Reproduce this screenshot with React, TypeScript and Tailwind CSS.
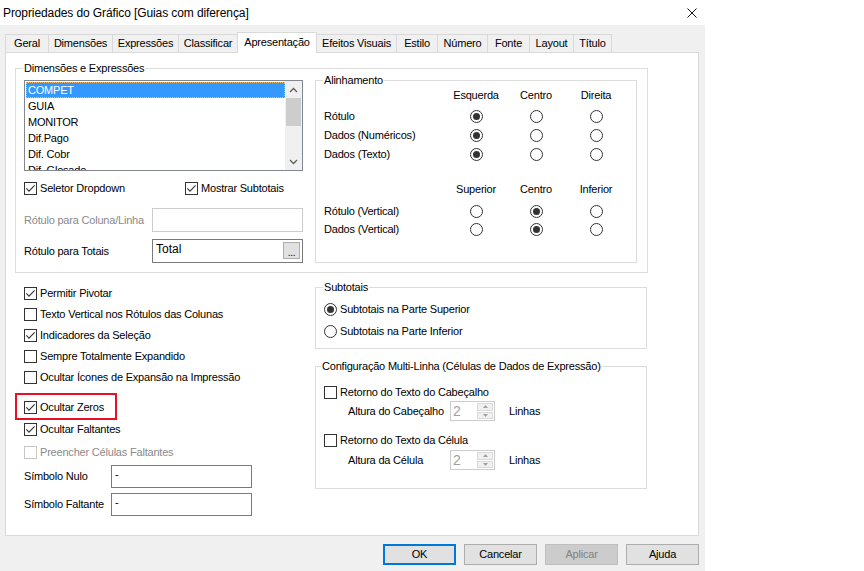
import React from "react";

const Check = ({ checked = false, disabled = false }: { checked?: boolean; disabled?: boolean }) => (
  <span
    className={`w-[13px] h-[13px] shrink-0 border bg-white flex items-center justify-center ${
      disabled ? "border-[#c6c6c6]" : "border-[#333333]"
    }`}
  >
    {checked && (
      <svg width="11" height="11" viewBox="0 0 11 11">
        <path d="M1.3 5.4 L4 8.1 L9.6 2.3" fill="none" stroke="#333333" strokeWidth="1.1" />
      </svg>
    )}
  </span>
);

const Radio = ({ on = false }: { on?: boolean }) => (
  <span className="w-[13px] h-[13px] shrink-0 rounded-full border border-[#333333] bg-white flex items-center justify-center">
    {on && <span className="w-[7px] h-[7px] rounded-full bg-[#333333]" />}
  </span>
);

const Group = ({
  title,
  className,
  legendLeft,
  children,
}: {
  title: string;
  className: string;
  legendLeft: string;
  children?: React.ReactNode;
}) => (
  <div className={`relative border border-[#dcdcdc] ${className}`}>
    <span className={`absolute top-[-8px] ${legendLeft} bg-white px-[1px] leading-[14px] whitespace-nowrap`}>
      {title}
    </span>
    {children}
  </div>
);

const CheckRow = ({
  label,
  checked = false,
  disabled = false,
  h = "h-[21px]",
}: {
  label: string;
  checked?: boolean;
  disabled?: boolean;
  h?: string;
}) => (
  <div className={`flex items-center gap-[3px] ${h}`}>
    <Check checked={checked} disabled={disabled} />
    <span className={disabled ? "text-[#8a8a8a]" : ""}>{label}</span>
  </div>
);

const AlignRow = ({ label, sel, h }: { label: string; sel: number; h: string }) => (
  <div className={`flex items-center ${h}`}>
    <span className="w-[122px]">{label}</span>
    {[0, 1, 2].map((i) => (
      <span key={i} className="w-[60px] flex justify-center">
        <Radio on={sel === i} />
      </span>
    ))}
  </div>
);

const AlignHeader = ({ cols, h }: { cols: string[]; h: string }) => (
  <div className={`flex items-center ${h}`}>
    <span className="w-[122px]" />
    {cols.map((c) => (
      <span key={c} className="w-[60px] text-center">
        {c}
      </span>
    ))}
  </div>
);

const Spin = () => (
  <div className="w-[45px] h-[20px] border border-[#cccccc] bg-white flex">
    <span className="flex-1 pl-[2px] text-[#a0a0a0] text-[14px] leading-[18px] tracking-normal">2</span>
    <div className="w-[17px] flex flex-col py-[1px] pr-[1px] gap-[1px]">
      <span className="flex-1 bg-[#f0f0f0] border border-[#dadada] flex items-center justify-center">
        <svg width="5" height="3" viewBox="0 0 5 3">
          <path d="M0 3 L2.5 0 L5 3 Z" fill="#a0a0a0" />
        </svg>
      </span>
      <span className="flex-1 bg-[#f0f0f0] border border-[#dadada] flex items-center justify-center">
        <svg width="5" height="3" viewBox="0 0 5 3">
          <path d="M0 0 L2.5 3 L5 0 Z" fill="#a0a0a0" />
        </svg>
      </span>
    </div>
  </div>
);

const tabs: { label: string; w: string; sel?: boolean }[] = [
  { label: "Geral", w: "w-[43px]" },
  { label: "Dimensões", w: "w-[64px]" },
  { label: "Expressões", w: "w-[66px]" },
  { label: "Classificar", w: "w-[59px]" },
  { label: "Apresentação", w: "w-[80px]", sel: true },
  { label: "Efeitos Visuais", w: "w-[79px]" },
  { label: "Estilo", w: "w-[41px]" },
  { label: "Número", w: "w-[50px]" },
  { label: "Fonte", w: "w-[42px]" },
  { label: "Layout", w: "w-[44px]" },
  { label: "Título", w: "w-[39px]" },
];

const listItems = ["COMPET", "GUIA", "MONITOR", "Dif.Pago", "Dif. Cobr", "Dif. Glosado"];

export default function App() {
  return (
    <div className="w-[864px] h-[571px] bg-white relative overflow-hidden font-['Liberation_Sans',Arial,sans-serif] text-[11px] tracking-[-0.2px] text-black">
      {/* title bar */}
      <div className="w-[705px] h-[25px] flex items-center justify-between">
        <span className="pl-[3px] text-[12px] tracking-[-0.1px]">Propriedades do Gráfico [Guias com diferença]</span>
        <svg width="10" height="10" viewBox="0 0 10 10" className="mr-[8px] mt-[1px]">
          <path d="M0.5 0.5 L9.5 9.5 M9.5 0.5 L0.5 9.5" stroke="#111111" strokeWidth="1" />
        </svg>
      </div>

      {/* dialog body */}
      <div className="w-[705px] h-[546px] bg-[#f0f0f0] flex flex-col">
        {/* tabs */}
        <div className="h-[27px] pl-[5px] flex items-end">
          {tabs.map((t, i) => {
            const prevSel = i > 0 && tabs[i - 1].sel;
            if (t.sel) {
              return (
                <div
                  key={t.label}
                  className={`${t.w} h-[21px] -mb-[1px] relative z-10 bg-white border-t border-l border-r border-[#d9d9d9] flex items-center justify-center pb-[2px]`}
                >
                  {t.label}
                </div>
              );
            }
            return (
              <div
                key={t.label}
                className={`${t.w} h-[18px] bg-[#f0f0f0] border-t border-[#d9d9d9] flex items-center justify-center ${
                  prevSel ? "" : "border-l"
                } ${i === tabs.length - 1 ? "border-r" : ""}`}
              >
                {t.label}
              </div>
            );
          })}
        </div>

        {/* panel */}
        <div className="ml-[5px] w-[694px] h-[484px] border border-[#d9d9d9] bg-white flex flex-col">
          {/* Dimensões e Expressões */}
          <Group
            title="Dimensões e Expressões"
            legendLeft="left-[7px]"
            className="mt-[15px] ml-[9px] w-[633px] h-[205px] shrink-0 flex pt-[11px] pl-[8px]"
          >
            <div className="w-[279px] flex flex-col">
              {/* listbox */}
              <div className="h-[91px] border border-[#828790] flex overflow-hidden">
                <div className="flex-1 pt-[1px] pl-[1px] overflow-hidden">
                  {listItems.map((it, i) => (
                    <div
                      key={it}
                      className={`h-[16px] leading-[14px] pl-[1px] border ${
                        i === 0
                          ? "bg-[#3399ff] text-white border-dotted border-[#f0c070]"
                          : "border-transparent"
                      }`}
                    >
                      {it}
                    </div>
                  ))}
                </div>
                <div className="w-[17px] bg-[#f0f0f0] flex flex-col">
                  <div className="h-[17px] flex items-center justify-center">
                    <svg width="9" height="6" viewBox="0 0 9 6">
                      <path d="M1 5 L4.5 1.5 L8 5" fill="none" stroke="#606060" strokeWidth="1.3" />
                    </svg>
                  </div>
                  <div className="flex-1 px-[1px]">
                    <div className="h-[28px] bg-[#cdcdcd]" />
                  </div>
                  <div className="h-[17px] flex items-center justify-center">
                    <svg width="9" height="6" viewBox="0 0 9 6">
                      <path d="M1 1 L4.5 4.5 L8 1" fill="none" stroke="#606060" strokeWidth="1.3" />
                    </svg>
                  </div>
                </div>
              </div>

              <div className="mt-[11px] h-[13px] flex items-center">
                <div className="w-[161px] flex items-center gap-[3px]">
                  <Check checked />
                  <span>Seletor Dropdown</span>
                </div>
                <div className="flex items-center gap-[3px]">
                  <Check checked />
                  <span>Mostrar Subtotais</span>
                </div>
              </div>

              <div className="mt-[13px] h-[24px] flex items-center">
                <span className="w-[128px] text-[#8a8a8a]">Rótulo para Coluna/Linha</span>
                <div className="w-[151px] h-[24px] border border-[#cccccc] bg-white" />
              </div>

              <div className="mt-[7px] h-[24px] flex items-center">
                <span className="w-[128px]">Rótulo para Totais</span>
                <div className="w-[151px] h-[24px] border border-[#7a7a7a] bg-white flex items-start justify-between pl-[3px] pr-[2px] pt-[2px]">
                  <span className="leading-[14px] text-[12px] tracking-normal">Total</span>
                  <span className="w-[17px] h-[17px] bg-[#e1e1e1] border border-[#adadad] flex items-end justify-center leading-[10px] text-[10px]">
                    ...
                  </span>
                </div>
              </div>
            </div>

            {/* Alinhamento */}
            <Group
              title="Alinhamento"
              legendLeft="left-[7px]"
              className="ml-[12px] w-[322px] h-[183px] pt-[4px] pl-[8px]"
            >
              <AlignHeader cols={["Esquerda", "Centro", "Direita"]} h="h-[20px]" />
              <AlignRow label="Rótulo" sel={0} h="h-[22px]" />
              <AlignRow label="Dados (Numéricos)" sel={0} h="h-[17px]" />
              <AlignRow label="Dados (Texto)" sel={0} h="h-[21px]" />
              <div className="h-[14px]" />
              <AlignHeader cols={["Superior", "Centro", "Inferior"]} h="h-[20px]" />
              <AlignRow label="Rótulo (Vertical)" sel={1} h="h-[24px]" />
              <AlignRow label="Dados (Vertical)" sel={1} h="h-[13px]" />
            </Group>
          </Group>

          {/* lower section */}
          <div className="flex">
            {/* left column */}
            <div className="w-[300px] ml-[9px] flex flex-col">
              <div className="mt-[10px] pl-[9px] flex flex-col">
                <CheckRow label="Permitir Pivotar" checked />
                <CheckRow label="Texto Vertical nos Rótulos das Colunas" />
                <CheckRow label="Indicadores da Seleção" checked />
                <CheckRow label="Sempre Totalmente Expandido" />
                <CheckRow label="Ocultar Ícones de Expansão na Impressão" />
              </div>
              <div className="mt-[5px] w-[102px] h-[27px] border-2 border-[#e81123] flex items-center pl-[7px] pt-[1px] gap-[3px]">
                <Check checked />
                <span>Ocultar Zeros</span>
              </div>
              <div className="pl-[9px] flex flex-col">
                <CheckRow label="Ocultar Faltantes" checked h="h-[18px]" />
                <div className="mt-[4px]">
                  <CheckRow label="Preencher Células Faltantes" disabled h="h-[20px]" />
                </div>
                <div className="mt-[3px] flex items-center">
                  <span className="w-[87px]">Símbolo Nulo</span>
                  <div className="w-[141px] h-[23px] border border-[#7a7a7a] bg-white pl-[3px] leading-[16px]">-</div>
                </div>
                <div className="mt-[5px] flex items-center">
                  <span className="w-[87px]">Símbolo Faltante</span>
                  <div className="w-[141px] h-[23px] border border-[#7a7a7a] bg-white pl-[3px] leading-[16px]">-</div>
                </div>
              </div>
            </div>

            {/* right column */}
            <div className="flex flex-col">
              <Group
                title="Subtotais"
                legendLeft="left-[7px]"
                className="mt-[14px] w-[332px] h-[62px] pt-[12px] pl-[8px]"
              >
                <div className="h-[18px] flex items-center gap-[3px]">
                  <Radio on />
                  <span>Subtotais na Parte Superior</span>
                </div>
                <div className="mt-[4px] h-[18px] flex items-center gap-[3px]">
                  <Radio />
                  <span>Subtotais na Parte Inferior</span>
                </div>
              </Group>

              <Group
                title="Configuração Multi-Linha (Células de Dados de Expressão)"
                legendLeft="left-[5px]"
                className="mt-[17px] w-[332px] h-[123px] pt-[18px] pl-[8px]"
              >
                <CheckRow label="Retorno do Texto do Cabeçalho" h="h-[14px]" />
                <div className="mt-[2px] ml-[24px] h-[20px] flex items-center">
                  <span className="w-[102px]">Altura do Cabeçalho</span>
                  <Spin />
                  <span className="ml-[14px]">Linhas</span>
                </div>
                <div className="mt-[12px]">
                  <CheckRow label="Retorno do Texto da Célula" h="h-[14px]" />
                </div>
                <div className="mt-[3px] ml-[24px] h-[20px] flex items-center">
                  <span className="w-[102px]">Altura da Célula</span>
                  <Spin />
                  <span className="ml-[14px]">Linhas</span>
                </div>
              </Group>
            </div>
          </div>
        </div>

        {/* buttons */}
        <div className="mt-[8px] pr-[6px] flex justify-end gap-[8px]">
          <div className="w-[73px] h-[21px] bg-[#e1e1e1] border-2 border-[#0078d7] flex items-center justify-center">OK</div>
          <div className="w-[73px] h-[21px] bg-[#e1e1e1] border border-[#adadad] flex items-center justify-center">
            Cancelar
          </div>
          <div className="w-[73px] h-[21px] bg-[#cccccc] border border-[#bfbfbf] text-[#838383] flex items-center justify-center">
            Aplicar
          </div>
          <div className="w-[73px] h-[21px] bg-[#e1e1e1] border border-[#adadad] flex items-center justify-center">
            Ajuda
          </div>
        </div>
      </div>
    </div>
  );
}
